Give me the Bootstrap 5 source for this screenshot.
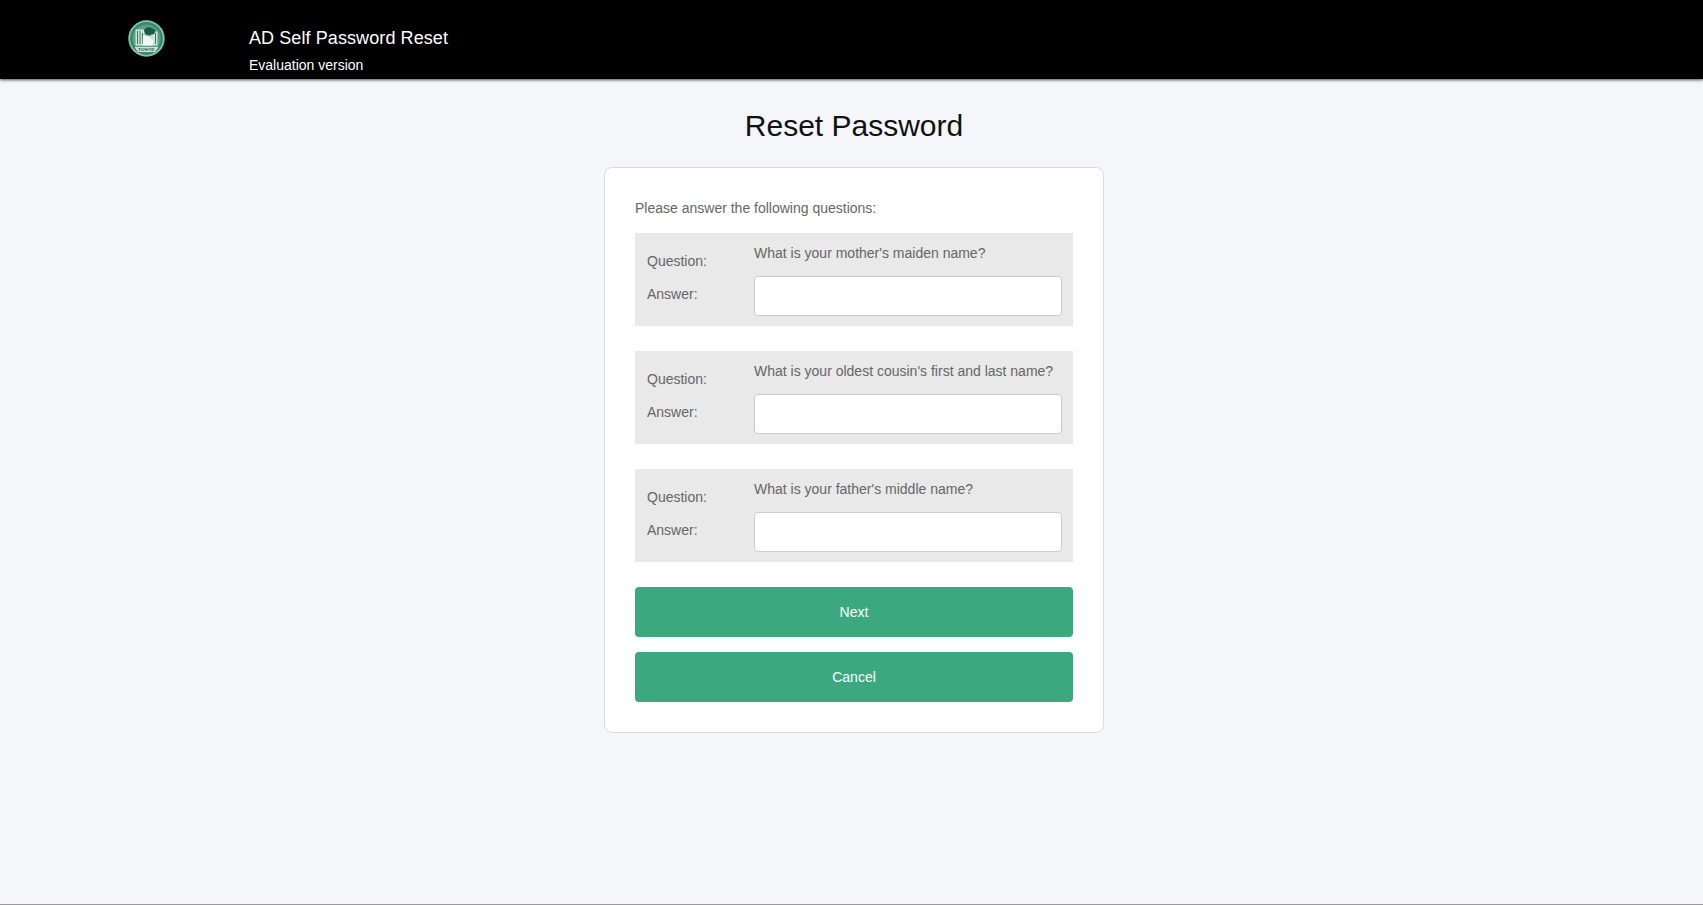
<!DOCTYPE html>
<html lang="en">
<head>
<meta charset="utf-8">
<title>Reset Password</title>
<link href="https://cdn.jsdelivr.net/npm/bootstrap@5.3.0/dist/css/bootstrap.min.css" rel="stylesheet">
<style>
html,body{height:100%}
body{background:#f4f6f9;font-family:"Liberation Sans",Arial,sans-serif;font-size:14px;color:#666;height:905px;overflow:hidden}
.top-band{height:79px;background:#000;box-shadow:0 1px 3px rgba(0,0,0,.7);padding-left:128px;flex:none}
.logo-cell{width:121px;padding-top:20px}
.app-name{font-size:18px;line-height:22px;color:#fff;padding-top:27px;letter-spacing:.09px}
.app-note{font-size:14px;line-height:16px;color:#fff;padding-top:8px}
.page-main{min-height:0;padding-left:5px}
.page-title{font-size:30px;line-height:36px;color:#111;font-weight:400;margin:29px 0 23px;text-align:center}
.reset-panel{width:500px;height:566px;background:#fff;border:1px solid #dcdcdc;border-radius:8px;padding:30px}
.intro-line{line-height:18px;margin:1px 0 16px;padding:0}
.qa-box{background:#e9e9e9;height:93px;padding:0 11px 0 12px;margin-bottom:25px}
.qa-label{width:107px;flex:none}
.q-label{line-height:18px;padding-top:19px}
.a-label{line-height:18px;padding-top:15px}
.q-text{line-height:18px;padding-top:11px;height:43px}
.qa-input{height:40px;border:1px solid #ccc;border-radius:4px;background:#fff;padding:6px 12px;font-size:14px}
.act-btn{background:#3ba87f;border:0;border-radius:4px;height:50px;color:#fff;font-size:14px;width:100%;display:block}
.act-btn:hover{background:#3ba87f;color:#fff}
.act-btn+.act-btn{margin-top:15px}
.foot-line{height:1px;background:#9a9a9a;flex:none}
</style>
</head>
<body class="d-flex flex-column">
<header class="top-band d-flex">
  <div class="logo-cell">
    <svg width="37" height="37" viewBox="0 0 37 37" role="img" aria-label="Towne logo">
      <circle cx="18.5" cy="18.5" r="18.2" fill="#8fbfad"/>
      <circle cx="18.5" cy="18.5" r="16.400" fill="#2f8a6c"/>
      <circle cx="18.5" cy="18.5" r="14" fill="#5c9f88"/>
      <path d="M7.500 9.500h8.500l2.500 16h-11z" fill="#cfe3da"/>
      <path d="M19 25.500l2-14h8.500v14z" fill="#cfe3da"/>
      <path d="M9.500 11v13M12 11v13M14.500 13v11M27.500 13v11" stroke="#2f7a60" stroke-width="1" fill="none"/>
      <path d="M16.500 9.500c1.500-2.500 6-3 7.500-1 2.500 0 4 2 3 4-1 2-3 2.500-4.500 2l-.5 3h-3l.500-3c-2 0-4-3-3-5z" fill="#1d5a45"/>
      <path d="M15 15.500h6.500l1 3.500 3 1-1 5.500H14.500z" fill="#f2f7f5"/>
      <path d="M6.500 27h24l-3.500 5H10z" fill="#cfe3da"/>
      <text x="18.5" y="31.300" font-family="Liberation Serif,serif" font-size="4.400" font-weight="700" fill="#174f3c" text-anchor="middle">TOWNE</text>
    </svg>
  </div>
  <div>
    <div class="app-name">AD Self Password Reset</div>
    <div class="app-note">Evaluation version</div>
  </div>
</header>
<main class="page-main flex-grow-1 d-flex flex-column align-items-center">
  <h1 class="page-title">Reset Password</h1>
  <form class="reset-panel">
    <p class="intro-line">Please answer the following questions:</p>
    <div class="qa-box d-flex">
      <div class="qa-label"><div class="q-label">Question:</div><div class="a-label">Answer:</div></div>
      <div class="flex-grow-1"><div class="q-text">What is your mother's maiden name?</div><input type="text" class="form-control qa-input" aria-label="Answer 1"></div>
    </div>
    <div class="qa-box d-flex">
      <div class="qa-label"><div class="q-label">Question:</div><div class="a-label">Answer:</div></div>
      <div class="flex-grow-1"><div class="q-text">What is your oldest cousin's first and last name?</div><input type="text" class="form-control qa-input" aria-label="Answer 2"></div>
    </div>
    <div class="qa-box d-flex">
      <div class="qa-label"><div class="q-label">Question:</div><div class="a-label">Answer:</div></div>
      <div class="flex-grow-1"><div class="q-text">What is your father's middle name?</div><input type="text" class="form-control qa-input" aria-label="Answer 3"></div>
    </div>
    <button type="button" class="btn act-btn">Next</button>
    <button type="button" class="btn act-btn">Cancel</button>
  </form>
</main>
<div class="foot-line"></div>
<script src="https://cdn.jsdelivr.net/npm/bootstrap@5.3.0/dist/js/bootstrap.bundle.min.js"></script>
</body>
</html>
